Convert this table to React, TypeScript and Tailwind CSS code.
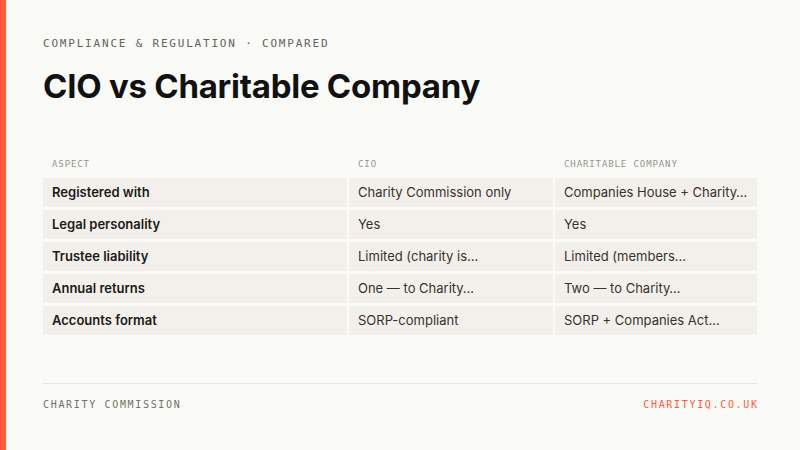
import React from "react";

const rows: [string, string, string][] = [
  ["Registered with", "Charity Commission only", "Companies House + Charity…"],
  ["Legal personality", "Yes", "Yes"],
  ["Trustee liability", "Limited (charity is…", "Limited (members…"],
  ["Annual returns", "One — to Charity…", "Two — to Charity…"],
  ["Accounts format", "SORP-compliant", "SORP + Companies Act…"],
];

const mono = { fontFamily: '"DejaVu Sans Mono", "Liberation Mono", monospace' };
const sans = { fontFamily: 'Inter, "Noto Sans", sans-serif' };

export default function App() {
  return (
    <div className="w-[800px] h-[450px] flex bg-[#fafaf6] overflow-hidden" style={sans}>
      <div className="w-[6px] h-full bg-[#ff5a3c] shrink-0" />
      <div className="flex-1 flex flex-col pl-[37px] pr-[43px]">
        <div
          className="mt-[36px] h-[16px] leading-[16px] text-[11px] tracking-[1.8px] text-[#63635e]"
          style={mono}
        >
          COMPLIANCE &amp; REGULATION · COMPARED
        </div>
        <div className="mt-[14px] h-[40px] leading-[40px] text-[33px] font-bold text-[#111111] tracking-[-0.25px]">
          CIO vs Charitable Company
        </div>
        <div className="mt-[50px] grid grid-cols-[304px_204px_202px] gap-x-[2px] h-[16px] items-center">
          {["ASPECT", "CIO", "CHARITABLE COMPANY"].map((h) => (
            <div
              key={h}
              className="pl-[9px] text-[9px] leading-[16px] tracking-[0.9px] text-[#95958f]"
              style={mono}
            >
              {h}
            </div>
          ))}
        </div>
        <div className="mt-[6px] grid grid-cols-[304px_204px_202px] gap-x-[2px] gap-y-[3px] auto-rows-[29px]">
          {rows.map((r) => (
            <React.Fragment key={r[0]}>
              <div className="bg-[#f3f0eb] pl-[9px] flex items-center text-[13px] font-semibold text-[#1a1a1a]">
                {r[0]}
              </div>
              <div className="bg-[#f3f0eb] pl-[9px] flex items-center text-[13px] text-[#333330]">
                {r[1]}
              </div>
              <div className="bg-[#f3f0eb] pl-[9px] flex items-center text-[13px] text-[#333330]">
                {r[2]}
              </div>
            </React.Fragment>
          ))}
        </div>
        <div className="mt-[48px] border-t border-[#e6e6e0]" />
        <div className="mt-[12px] flex justify-between items-center h-[16px]" style={mono}>
          <span className="text-[10px] tracking-[1.67px] text-[#70706a]">CHARITY COMMISSION</span>
          <span className="text-[10px] tracking-[1.67px] text-[#ff5a3c] mr-[-1.67px]">CHARITYIQ.CO.UK</span>
        </div>
      </div>
    </div>
  );
}
